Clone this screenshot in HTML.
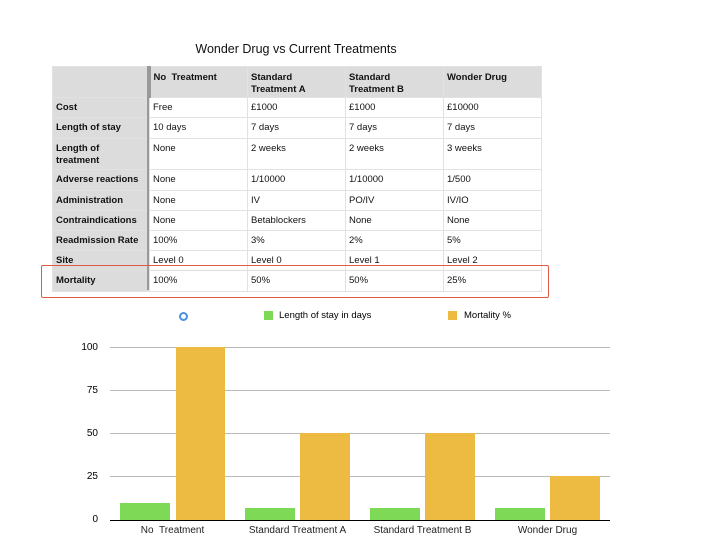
<!DOCTYPE html><html><head><style>
body{margin:0;width:720px;height:540px;background:#fff;position:relative;font-family:"Liberation Sans",Arial,sans-serif;overflow:hidden}
.a{position:absolute}
table{position:absolute;left:52px;top:66px;border-collapse:collapse;font-size:9.5px;color:#111}
td{border:1px solid #e2e2e2;padding:4px 3px 0 3px;vertical-align:top;line-height:12px;box-sizing:border-box}
td.h{background:#dcdcdc;font-weight:bold}
tr.hd td{background:#dcdcdc;font-weight:bold;height:31px;padding-top:5px}
.lb{font-size:10px;color:#222;text-align:center;width:125px}
.g{background:#7ed957}.y{background:#edbb42}
.gl{left:110px;width:500px;height:1px;background:#bbb}
.yt{font-size:10px;left:60px;width:38px;text-align:right}
</style></head><body>
<div class="a" style="left:0;top:42px;width:592px;text-align:center;font-size:12.5px;color:#111">Wonder Drug vs Current Treatments</div>
<table>
<colgroup><col style="width:97px"><col style="width:98px"><col style="width:98px"><col style="width:98px"><col style="width:98px"></colgroup>
<tr class="hd"><td style="border-right:2px solid #999"></td><td>No &nbsp;Treatment</td><td>Standard<br>Treatment A</td><td>Standard<br>Treatment B</td><td>Wonder Drug</td></tr>
<tr style="height:20px"><td class="h">Cost</td><td>Free</td><td>£1000</td><td>£1000</td><td>£10000</td></tr>
<tr style="height:21px"><td class="h">Length of stay</td><td>10 days</td><td>7 days</td><td>7 days</td><td>7 days</td></tr>
<tr style="height:31px"><td class="h">Length of<br>treatment</td><td>None</td><td>2 weeks</td><td>2 weeks</td><td>3 weeks</td></tr>
<tr style="height:21px"><td class="h">Adverse reactions</td><td>None</td><td>1/10000</td><td>1/10000</td><td>1/500</td></tr>
<tr style="height:20px"><td class="h">Administration</td><td>None</td><td>IV</td><td>PO/IV</td><td>IV/IO</td></tr>
<tr style="height:20px"><td class="h">Contraindications</td><td>None</td><td>Betablockers</td><td>None</td><td>None</td></tr>
<tr style="height:20px"><td class="h">Readmission Rate</td><td>100%</td><td>3%</td><td>2%</td><td>5%</td></tr>
<tr style="height:20px"><td class="h">Site</td><td>Level 0</td><td>Level 0</td><td>Level 1</td><td>Level 2</td></tr>
<tr style="height:21px"><td class="h">Mortality</td><td>100%</td><td>50%</td><td>50%</td><td>25%</td></tr>
</table>
<div class="a" style="left:147px;top:66px;width:2px;height:224px;background:#999"></div>
<div class="a" style="left:41px;top:265px;width:506px;height:31px;border:1.5px solid #e05a45;border-radius:2px"></div>
<div class="a" style="left:179px;top:312px;width:5px;height:5px;border:2px solid #4a90e2;border-radius:50%"></div>
<div class="a g" style="left:264px;top:311px;width:9px;height:9px"></div>
<div class="a" style="left:279px;top:310px;font-size:9.5px">Length of stay in days</div>
<div class="a y" style="left:448px;top:311px;width:9px;height:9px"></div>
<div class="a" style="left:464px;top:310px;font-size:9.5px">Mortality %</div>
<div class="a gl" style="top:347px"></div><div class="a gl" style="top:390px"></div><div class="a gl" style="top:433px"></div><div class="a gl" style="top:476px"></div>
<div class="a yt" style="top:342px">100</div><div class="a yt" style="top:385px">75</div><div class="a yt" style="top:428px">50</div><div class="a yt" style="top:471px">25</div><div class="a yt" style="top:514px">0</div>
<div class="a g" style="left:120px;top:503px;width:50px;height:17px"></div><div class="a y" style="left:176px;top:347px;width:49px;height:173px"></div>
<div class="a g" style="left:245px;top:508px;width:50px;height:12px"></div><div class="a y" style="left:300px;top:433px;width:50px;height:87px"></div>
<div class="a g" style="left:370px;top:508px;width:50px;height:12px"></div><div class="a y" style="left:425px;top:433px;width:50px;height:87px"></div>
<div class="a g" style="left:495px;top:508px;width:50px;height:12px"></div><div class="a y" style="left:550px;top:476px;width:50px;height:44px"></div>
<div class="a" style="left:110px;top:520px;width:500px;height:1px;background:#000"></div>
<div class="a lb" style="left:110px;top:525px">No &nbsp;Treatment</div>
<div class="a lb" style="left:235px;top:525px">Standard Treatment A</div>
<div class="a lb" style="left:360px;top:525px">Standard Treatment B</div>
<div class="a lb" style="left:485px;top:525px">Wonder Drug</div>
</body></html>
